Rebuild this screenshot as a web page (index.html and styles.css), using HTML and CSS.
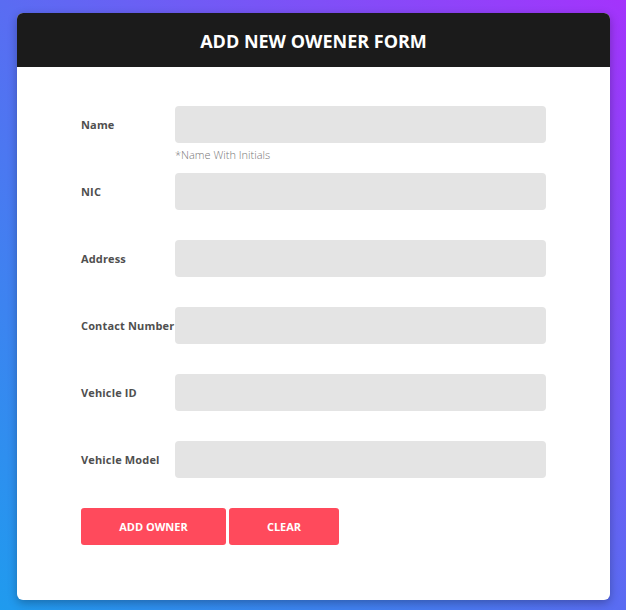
FILE: index.html
```html
<!DOCTYPE html>
<html>
<head>
<meta charset="utf-8">
<link rel="stylesheet" href="styles.css">
</head>
<body>
<div class="card">
  <div class="card-header">ADD NEW OWENER FORM</div>
  <form class="form">
    <div class="row">
      <label class="label">Name</label>
      <div class="field">
        <input class="input" type="text">
        <span class="hint">*Name With Initials</span>
      </div>
    </div>
    <div class="row">
      <label class="label">NIC</label>
      <div class="field"><input class="input" type="text"></div>
    </div>
    <div class="row">
      <label class="label">Address</label>
      <div class="field"><input class="input" type="text"></div>
    </div>
    <div class="row">
      <label class="label">Contact Number</label>
      <div class="field"><input class="input" type="text"></div>
    </div>
    <div class="row">
      <label class="label">Vehicle ID</label>
      <div class="field"><input class="input" type="text"></div>
    </div>
    <div class="row">
      <label class="label">Vehicle Model</label>
      <div class="field"><input class="input" type="text"></div>
    </div>
    <div class="actions">
      <button type="button" class="btn btn-add">ADD OWNER</button>
      <button type="button" class="btn btn-clear">CLEAR</button>
    </div>
  </form>
</div>
</body>
</html>
```
FILE: styles.css
```css
html, body {
  margin: 0;
  padding: 0;
  height: 100%;
}
body {
  font-family: "Open Sans", "Liberation Sans", sans-serif;
  background: linear-gradient(to top right, #1f9bee 0%, #5a6cf2 50%, #a433fc 100%);
  padding: 13px 16px 10px 17px;
  box-sizing: border-box;
  width: 626px;
  height: 610px;
}
.card {
  width: 593px;
  height: 587px;
  background: #fff;
  border-radius: 6px;
  overflow: hidden;
  box-shadow: 0 3px 10px rgba(0, 0, 0, 0.28);
  box-sizing: border-box;
}
.card-header {
  background: #1b1b1b;
  color: #fff;
  height: 54px;
  display: flex;
  align-items: center;
  justify-content: center;
  font-weight: 700;
  font-size: 18px;
  padding-top: 1px;
  box-sizing: border-box;
}
.form {
  padding: 39px 64px 0 64px;
  display: flex;
  flex-direction: column;
  gap: 30px;
}
.row {
  display: flex;
  align-items: center;
  height: 37px;
}
.label {
  width: 94px;
  flex: 0 0 94px;
  font-size: 11px;
  font-weight: 700;
  letter-spacing: 0.15px;
  color: #4f4f4f;
  white-space: nowrap;
}
.field {
  position: relative;
  flex: 1;
  height: 37px;
}
.input {
  display: block;
  width: 100%;
  height: 37px;
  border: none;
  border-radius: 4px;
  background: #e4e4e4;
  box-sizing: border-box;
  margin: 0;
  padding: 0 10px;
  outline: none;
}
.hint {
  position: absolute;
  left: 0;
  top: 41px;
  font-size: 11px;
  font-weight: 300;
  color: #777;
  white-space: nowrap;
}
.actions {
  display: flex;
  gap: 3px;
}
.btn {
  height: 37px;
  border: none;
  border-radius: 3px;
  background: #ff4a5c;
  color: #fff;
  font-family: "Open Sans", "Liberation Sans", sans-serif;
  font-weight: 700;
  font-size: 11px;
  padding: 0;
  margin: 0;
  cursor: pointer;
}
.btn-add {
  width: 145px;
}
.btn-clear {
  width: 110px;
}
```
